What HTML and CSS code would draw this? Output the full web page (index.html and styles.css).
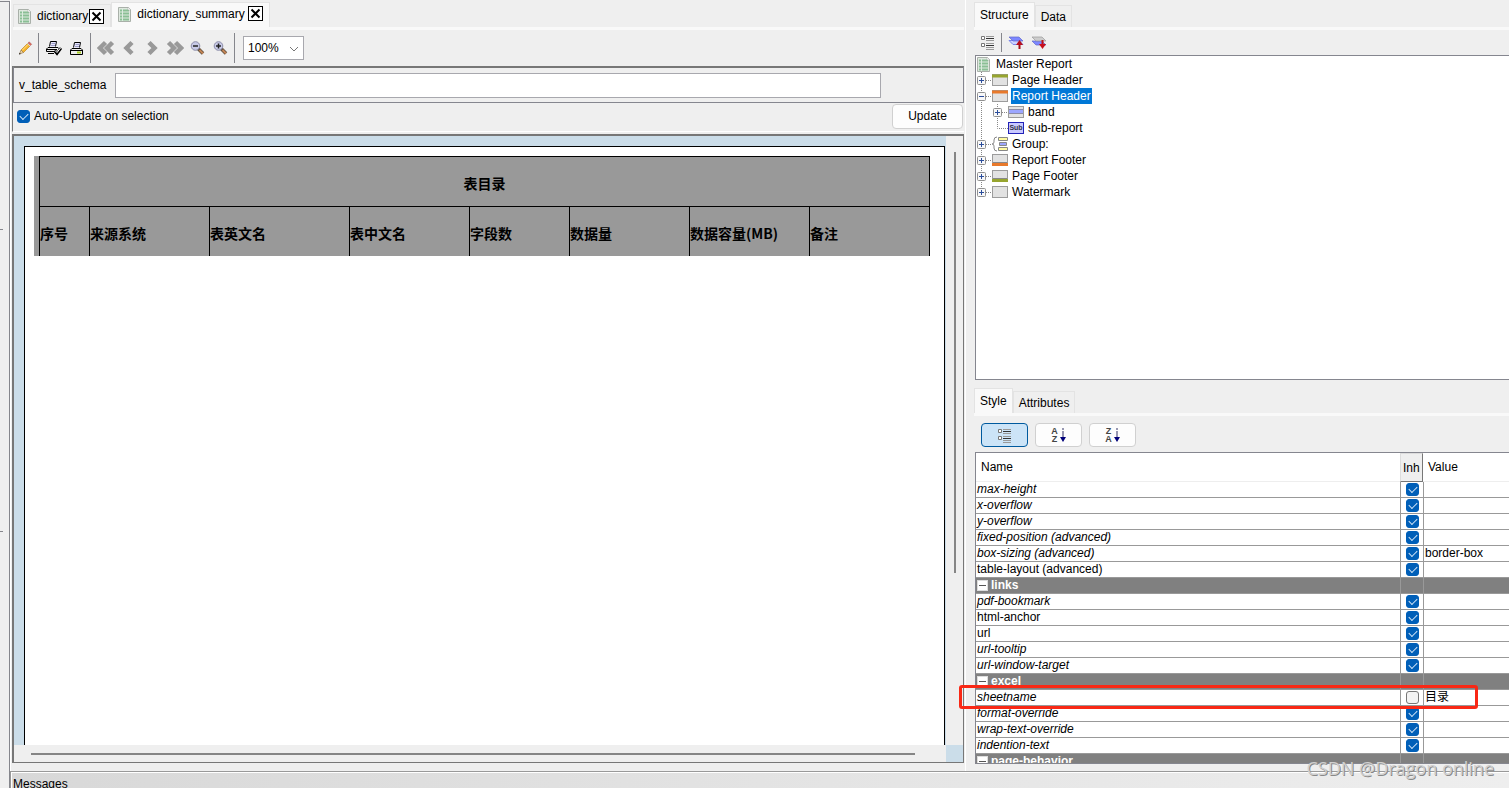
FILE: index.html
```html
<!DOCTYPE html>
<html lang="en">
<head>
<meta charset="utf-8">
<title>Report Designer</title>
<link rel="stylesheet" href="styles.css">
</head>
<body>
<svg class="defs" aria-hidden="true">
  <symbol id="doc" viewBox="0 0 16 16"><path d="M1.500 1.500h10l2 2v12h-12z" fill="#dfe8df" stroke="#a9b0a9"/><path d="M3 4.500h9M3 7.500h9M3 10.500h9M3 13.500h9" stroke="#8abf95" stroke-width="2"/><path d="M5.500 2v13" stroke="#dcebdf"/><path d="M11 1l3 3h-3z" fill="#fff" stroke="#a5aaa5" stroke-width=".5"/></symbol>
  <symbol id="close" viewBox="0 0 15 15"><rect x=".5" y=".5" width="14" height="14" fill="#fff" stroke="#000"/><path d="M3.500 3.500l8 8M11.500 3.500l-8 8" stroke="#000" stroke-width="2"/></symbol>
  <symbol id="pencil" viewBox="0 0 16 16"><path d="M4 10l6.500-6.500 2.500 2.500-6.500 6.500z" fill="#f6b52c" stroke="#b77b18" stroke-width=".6"/><path d="M5 10.500l6-6" stroke="#ffe28a"/><path d="M11 3l1.200-1.200 2.500 2.500L13.500 5.500z" fill="#e0655b" stroke="#9f6058" stroke-width=".5"/><path d="M10.500 3.500l2.500 2.500" stroke="#d5d5d5"/><path d="M4 10l2.500 2.500-4 1.500z" fill="#eed6a8" stroke="#8a6a3b" stroke-width=".6"/><path d="M2 14.500l.5-1.800 1.300 1.200z" fill="#222"/></symbol>
  <symbol id="printer" viewBox="0 0 16 16"><path d="M4.500 7.500l1-5h6l-1 5" fill="#e6e6fa" stroke="#000"/><path d="M6.500 4.500h4M6 6.500h4" stroke="#9a9ac8"/><path d="M3 8.500h9l1.500 1.500v4.500h-12V10z" fill="#eee" stroke="#000"/><path d="M1 10.500h13" stroke="#000"/><path d="M8 12.500h4" stroke="#a9cf25" stroke-width="2"/></symbol>
  <symbol id="printcheck" viewBox="0 0 16 16"><path d="M3.500 6.500l1-5h6l-1 5" fill="#e6e6fa" stroke="#000"/><path d="M5.500 3.500h4M5 5.500h4" stroke="#9a9ac8"/><path d="M2 7.500h10l1.500 1.500v2.500H.500V9z" fill="#eee" stroke="#000"/><path d="M1 9.500h10M2 13.500h6" stroke="#000"/><path d="M8.500 10.500l2.500 3 4-5.500" fill="none" stroke="#000" stroke-width="2.800"/><path d="M9 10.500l2 2 3.500-4.500" fill="none" stroke="#fff"/></symbol>
  <symbol id="left" viewBox="0 0 16 16"><path d="M11 2.500L5.500 8l5.500 5.500" fill="none" stroke="#999" stroke-width="4.500"/></symbol>
  <symbol id="dleft" viewBox="0 0 18 16"><path d="M8.500 2.500L3 8l5.500 5.500M15.500 2.500L10 8l5.500 5.500" fill="none" stroke="#999" stroke-width="4.500"/></symbol>
  <symbol id="lens" viewBox="0 0 16 16"><path d="M8 8.500l5 5" stroke="#60503f" stroke-width="3.500"/><path d="M9.500 10l3.500 3.500" stroke="#c58555" stroke-width="1.800"/><circle cx="5.500" cy="6" r="4.300" fill="#c7c9e6" stroke="#8b8ca8"/><path d="M3 6h5" stroke="#222" stroke-width="1.500"/></symbol>
  <symbol id="list" viewBox="0 0 14 15"><path d="M.500 1.500h3v3h-3zM.500 8.500h3v3h-3z" fill="#fff" stroke="#777"/><path d="M5 3.500h8M5 10.500h8" stroke="#333"/><path d="M5 1.500h8M5 5.500h8M5 8.500h8M5 12.500h8M5 14.500h8" stroke="#999"/></symbol>
  <symbol id="plus" viewBox="0 0 16 16"><path d="M5.500 0v16M10 8.500h6" stroke="#888" stroke-dasharray="1 1"/><rect x="1.500" y="4.500" width="8" height="8" rx="1" fill="#f8f8f8" stroke="#909090"/><path d="M3 8.500h5M5.500 6v5" stroke="#2b4d9b"/></symbol>
  <symbol id="pluslast" viewBox="0 0 16 16"><path d="M5.500 0v4M10 8.500h6" stroke="#888" stroke-dasharray="1 1"/><rect x="1.500" y="4.500" width="8" height="8" rx="1" fill="#f8f8f8" stroke="#909090"/><path d="M3 8.500h5M5.500 6v5" stroke="#2b4d9b"/></symbol>
  <symbol id="minus" viewBox="0 0 16 16"><path d="M5.500 0v16M10 8.500h6" stroke="#888" stroke-dasharray="1 1"/><rect x="1.500" y="4.500" width="8" height="8" rx="1" fill="#f8f8f8" stroke="#909090"/><path d="M3 8.500h5" stroke="#2b4d9b"/></symbol>
  <symbol id="line" viewBox="0 0 16 16"><path d="M5.500 0v16" stroke="#888" stroke-dasharray="1 1"/></symbol>
  <symbol id="elbow" viewBox="0 0 16 16"><path d="M5.500 0v8.500h10.500" fill="none" stroke="#888" stroke-dasharray="1 1"/></symbol>
  <symbol id="box" viewBox="0 0 16 16"><rect x=".5" y="2.500" width="15" height="11" fill="#e2e2e2" stroke="#9c9c9c"/></symbol>
  <symbol id="minusbox" viewBox="0 0 11 11"><rect x=".5" y=".5" width="10" height="10" fill="#fff" stroke="#ddd"/><path d="M2 5.500h7" stroke="#555"/></symbol>
</svg>

<div class="app">
  <aside class="rail"><i class="tick tick-a"></i><i class="tick tick-b"></i></aside>

  <main class="editor">
    <nav class="tabs">
      <div class="tab"><svg class="i16"><use href="#doc"/></svg><span>dictionary</span><button class="close" aria-label="Close dictionary"><svg><use href="#close"/></svg></button></div>
      <div class="tab active"><svg class="i16"><use href="#doc"/></svg><span>dictionary_summary</span><button class="close" aria-label="Close dictionary_summary"><svg><use href="#close"/></svg></button></div>
    </nav>
    <div class="toolbar">
      <button class="tool" aria-label="Edit"><svg class="i16"><use href="#pencil"/></svg></button>
      <i class="sep"></i>
      <button class="tool" aria-label="Preview"><svg class="i16"><use href="#printcheck"/></svg></button>
      <button class="tool" aria-label="Print"><svg class="i16"><use href="#printer"/></svg></button>
      <i class="sep"></i>
      <button class="tool" aria-label="First page"><svg class="i18"><use href="#dleft"/></svg></button>
      <button class="tool" aria-label="Previous page"><svg class="i16"><use href="#left"/></svg></button>
      <button class="tool" aria-label="Next page"><svg class="i16 flip"><use href="#left"/></svg></button>
      <button class="tool" aria-label="Last page"><svg class="i18 flip"><use href="#dleft"/></svg></button>
      <button class="tool" aria-label="Zoom out"><svg class="i16"><use href="#lens"/></svg></button>
      <button class="tool" aria-label="Zoom in"><svg class="i16"><use href="#lens"/><path d="M5.500 3.500v5" stroke="#222" stroke-width="1.500"/></svg></button>
      <i class="sep"></i>
      <div class="zoom"><select aria-label="Zoom"><option>100%</option></select><svg class="chev" viewBox="0 0 10 6"><path d="M1 1l4 4 4-4" fill="none" stroke="#777"/></svg></div>
    </div>
    <section class="params">
      <div class="field"><label for="schema">v_table_schema</label><input id="schema" type="text"></div>
      <div class="update"><input id="auto" class="check" type="checkbox" checked><label for="auto">Auto-Update on selection</label><button class="btn">Update</button></div>
    </section>
    <section class="preview">
      <div class="canvas">
        <div class="page">
          <div class="band">
            <table class="report">
              <colgroup><col class="c50"><col class="c120"><col class="c140"><col class="c120"><col class="c100"><col class="c120"><col class="c120"><col class="c121"></colgroup>
              <tr><th class="title" colspan="8">表目录</th></tr>
              <tr><th>序号</th><th>来源系统</th><th>表英文名</th><th>表中文名</th><th>字段数</th><th>数据量</th><th>数据容量(MB)</th><th>备注</th></tr>
            </table>
          </div>
        </div>
      </div>
      <div class="vscroll"><i></i></div>
      <div class="hscroll"><i></i></div>
      <div class="corner"></div>
    </section>
  </main>

  <aside class="side">
    <nav class="tabs side-tabs"><button class="tab active">Structure</button><button class="tab">Data</button></nav>
    <div class="toolbar side-tools">
      <button class="tool" aria-label="Expand list"><svg class="ilist"><use href="#list"/></svg></button>
      <i class="sep"></i>
      <button class="tool" aria-label="Move up"><svg class="ilayer" viewBox="0 0 16 14"><path d="M1 4.500h10l4 4H5z" fill="#ccd2ff" stroke="#7b86e8"/><path d="M1 1h10l4 4H5z" fill="#7d87ff" stroke="#6069c8" stroke-width=".7"/><path d="M11.500 13V6" stroke="#a50f18" stroke-width="2"/><path d="M8 9l3.500-5L15 9z" fill="#b80f1c"/></svg></button>
      <button class="tool" aria-label="Move down"><svg class="ilayer" viewBox="0 0 16 14"><path d="M1 5h10l4 4H5z" fill="#7d87ff" stroke="#6069c8" stroke-width=".7"/><path d="M1 1h10l4 4H5z" fill="#ccc" stroke="#999" stroke-width=".7"/><path d="M11.500 4v6" stroke="#c01018" stroke-width="2"/><path d="M8 8l3.500 5L15 8z" fill="#c80f1c"/></svg></button>
    </div>
    <ul class="tree">
      <li><svg class="i16"><use href="#doc"/></svg><span>Master Report</span></li>
      <li><svg class="i16"><use href="#plus"/></svg><svg class="i16"><use href="#box"/><path d="M0 4h16" stroke="#97a52f" stroke-width="3"/></svg><span>Page Header</span></li>
      <li><svg class="i16"><use href="#minus"/></svg><svg class="i16"><use href="#box"/><path d="M0 4h16" stroke="#e8792b" stroke-width="3"/></svg><span class="selected">Report Header</span></li>
      <li><svg class="i16"><use href="#line"/></svg><svg class="i16"><use href="#plus"/></svg><svg class="i16"><use href="#box"/><path d="M1 7.500h14" stroke="#9ca6ff" stroke-width="3"/><path d="M1 5.500h14M1 9.500h14" stroke="#8c8ca8"/></svg><span>band</span></li>
      <li><svg class="i16"><use href="#line"/></svg><svg class="i16"><use href="#elbow"/></svg><i class="sub">Sub</i><span>sub-report</span></li>
      <li><svg class="i16"><use href="#plus"/></svg><svg class="i16" viewBox="0 0 16 16"><path d="M5 1q-3 0-3 3v2q0 2-2 2 2 0 2 2v2q0 3 3 3" fill="none" stroke="#888"/><path d="M6.500 1.500h9v3h-9zM6.500 11.500h9v3h-9z" fill="#fffaa0" stroke="#888"/><path d="M7.500 6.500h7v3h-7z" fill="#9ca6ff" stroke="#888"/></svg><span>Group:</span></li>
      <li><svg class="i16"><use href="#plus"/></svg><svg class="i16"><use href="#box"/><path d="M0 12.500h16" stroke="#e8792b" stroke-width="3"/><path d="M1 10.500h14" stroke="#888"/></svg><span>Report Footer</span></li>
      <li><svg class="i16"><use href="#plus"/></svg><svg class="i16"><use href="#box"/><path d="M0 12.500h16" stroke="#97a52f" stroke-width="3"/><path d="M1 10.500h14" stroke="#888"/></svg><span>Page Footer</span></li>
      <li><svg class="i16"><use href="#pluslast"/></svg><svg class="i16"><use href="#box"/></svg><span>Watermark</span></li>
    </ul>

    <nav class="tabs side-tabs lower"><button class="tab active">Style</button><button class="tab">Attributes</button></nav>
    <div class="sorts">
      <button class="btn sort on" aria-label="Group"><svg class="ilist"><use href="#list"/></svg></button>
      <button class="btn sort" aria-label="Sort ascending"><span>A<br>Z</span><svg class="iarrow" viewBox="0 0 6 14"><path d="M3 0v2M3 3v6" stroke="#336"/><path d="M0 9h6l-3 5z" fill="#00007a"/></svg></button>
      <button class="btn sort" aria-label="Sort descending"><span>Z<br>A</span><svg class="iarrow" viewBox="0 0 6 14"><path d="M3 0v2M3 3v6" stroke="#336"/><path d="M0 9h6l-3 5z" fill="#00007a"/></svg></button>
    </div>
    <div class="props-wrap">
      <div class="props">
        <table>
          <colgroup><col><col class="cinh"><col class="cval"></colgroup>
          <thead><tr><th>Name</th><th class="inh">Inh</th><th>Value</th></tr></thead>
          <tbody>
            <tr><td class="it">max-height</td><td><input class="check" type="checkbox" checked aria-label="Inherit max-height"></td><td></td></tr>
            <tr><td class="it">x-overflow</td><td><input class="check" type="checkbox" checked aria-label="Inherit x-overflow"></td><td></td></tr>
            <tr><td class="it">y-overflow</td><td><input class="check" type="checkbox" checked aria-label="Inherit y-overflow"></td><td></td></tr>
            <tr><td class="it">fixed-position (advanced)</td><td><input class="check" type="checkbox" checked aria-label="Inherit fixed-position"></td><td></td></tr>
            <tr><td class="it">box-sizing (advanced)</td><td><input class="check" type="checkbox" checked aria-label="Inherit box-sizing"></td><td>border-box</td></tr>
            <tr><td>table-layout (advanced)</td><td><input class="check" type="checkbox" checked aria-label="Inherit table-layout"></td><td></td></tr>
            <tr class="group"><td><svg><use href="#minusbox"/></svg>links</td><td></td><td></td></tr>
            <tr><td class="it">pdf-bookmark</td><td><input class="check" type="checkbox" checked aria-label="Inherit pdf-bookmark"></td><td></td></tr>
            <tr><td>html-anchor</td><td><input class="check" type="checkbox" checked aria-label="Inherit html-anchor"></td><td></td></tr>
            <tr><td>url</td><td><input class="check" type="checkbox" checked aria-label="Inherit url"></td><td></td></tr>
            <tr><td class="it">url-tooltip</td><td><input class="check" type="checkbox" checked aria-label="Inherit url-tooltip"></td><td></td></tr>
            <tr><td class="it">url-window-target</td><td><input class="check" type="checkbox" checked aria-label="Inherit url-window-target"></td><td></td></tr>
            <tr class="group"><td><svg><use href="#minusbox"/></svg>excel</td><td></td><td></td></tr>
            <tr><td class="it">sheetname</td><td><input class="check" type="checkbox" aria-label="Inherit sheetname"></td><td>目录</td></tr>
            <tr><td class="it">format-override</td><td><input class="check" type="checkbox" checked aria-label="Inherit format-override"></td><td></td></tr>
            <tr><td class="it">wrap-text-override</td><td><input class="check" type="checkbox" checked aria-label="Inherit wrap-text-override"></td><td></td></tr>
            <tr><td class="it">indention-text</td><td><input class="check" type="checkbox" checked aria-label="Inherit indention-text"></td><td></td></tr>
            <tr class="group"><td><svg><use href="#minusbox"/></svg>page-behavior</td><td></td><td></td></tr>
          </tbody>
        </table>
      </div>
      <div class="highlight"></div>
    </div>
  </aside>

  <footer class="messages">Messages</footer>
  <div class="watermark">CSDN @Dragon online</div>
</div>
</body>
</html>
```
FILE: styles.css
```css
* { box-sizing: border-box; }
body { margin: 0; background: #efefef; color: #000; font: 12px/16px "Liberation Sans", "Noto Sans CJK SC", sans-serif; }
button, input, select { font: inherit; color: inherit; }
button { border: 0; padding: 0; background: none; }
svg { display: block; flex: none; }
.defs { position: absolute; width: 0; height: 0; }
.app { position: relative; display: grid; height: 100vh; overflow: hidden; grid-template: minmax(0, 1fr) 17px / 10px minmax(0, 955fr) minmax(0, 544fr); }
.i16 { width: 16px; height: 16px; }
.i18 { width: 18px; height: 16px; }
.ilist { width: 14px; height: 15px; }
.ilayer { width: 16px; height: 14px; }
.iarrow { width: 6px; height: 14px; }
.flip { transform: scaleX(-1); }

.rail { position: relative; grid-row: 1 / 3; margin-top: 1px; border-top: 1px solid #85868c; border-right: 1px solid #85868c; }
.tick { position: absolute; left: 0; width: 3px; height: 1px; background: #85868c; }
.tick-a { top: 227px; }
.tick-b { top: 529px; }

.editor { display: flex; flex-direction: column; min-height: 0; padding: 0 1px 8px 2px; border-left: 1px solid #fff; }
.tabs { display: flex; align-items: flex-end; height: 30px; padding-top: 2px; border-bottom: 3px solid #f9f9f9; }
.tab { display: flex; align-items: center; height: 23px; padding: 0 6px 0 3px; border: 1px solid #e3e3e3; border-bottom: 0; }
.tab .i16 { margin-right: 4px; }
.tab .close { margin-left: 1px; }
.tab.active { height: 25px; padding-bottom: 3px; padding-left: 5px; background: #f9f9f9; }
.tab.active .close { margin-left: 3px; }
.close svg { width: 15px; height: 15px; }

.toolbar { display: flex; align-items: center; height: 36px; flex: none; }
.tool { display: grid; place-items: center; width: 23px; height: 24px; }
.sep { width: 1px; height: 30px; margin: 0 3px 0 2px; background: #85868c; }
.zoom { position: relative; margin-left: 5px; }
.zoom select { display: block; width: 61px; height: 24px; padding: 0 4px; appearance: none; border: 1px solid #a8a8ae; border-radius: 0; background: #fff; }
.chev { position: absolute; right: 5px; top: 10px; width: 10px; height: 6px; pointer-events: none; }

.params { flex: none; border-left: 1px solid #777; margin-left: -1px; border-bottom: 1px solid #fff; }
.field { display: flex; align-items: center; gap: 5px; height: 37px; padding: 0 82px 0 5px; border: 1px solid #85868f; border-top: 2px solid #777; }
.field label { width: 91px; }
.field input { flex: 1; min-width: 0; height: 25px; border: 1px solid #a8a8ae; background: #fff; padding: 0 4px; }
.update { display: flex; align-items: center; height: 28px; padding: 0 1px 2px 4px; }
.update label { margin-left: 4px; flex: 1; }
.btn { width: 71px; height: 25px; border: 1px solid #d0d0d0; border-radius: 4px; background: #fdfdfd; }
.check { appearance: none; display: block; flex: none; width: 13px; height: 13px; margin: 0; border: 1px solid #777; border-radius: 3px; background: #f3f3f3; }
.check:checked { border-color: #005fb8; background: #005fb8; }
.check:checked::before { content: ""; display: block; width: 7px; height: 4px; margin: 2px; border: solid #cfe4f7; border-width: 0 0 1px 1px; transform: rotate(-45deg); }

.preview { flex: 1; min-height: 0; display: grid; grid-template: minmax(0, 1fr) 17px / minmax(0, 1fr) 17px; margin: 2px 0 0 -1px; border: 2px solid #777; border-width: 2px 1px 1px 2px; }
.canvas { padding: 10px 1px 0 10px; background: #cbdde9; }
.page { height: 100%; padding: 9px; border: 1px solid #000; border-bottom: 0; background: #fff; }
.band { width: max-content; padding-left: 5px; background: #999; }
.report { width: 891px; table-layout: fixed; border-spacing: 0; font: bold 14px/20px "Noto Sans CJK SC", sans-serif; }
.report th { height: 50px; padding: 2px 0 0; border: solid #000; border-width: 1px 0 0 1px; text-align: left; white-space: nowrap; }
.report th:last-child { border-right-width: 1px; }
.report .title { text-align: center; }
.c50 { width: 50px; }
.c100 { width: 100px; }
.c120 { width: 120px; }
.c121 { width: 121px; }
.c140 { width: 140px; }
.vscroll { padding: 16px 0 0 8px; }
.vscroll i { display: block; width: 2px; height: 71%; background: #858585; }
.hscroll { padding: 8px 31px 0 17px; }
.hscroll i { display: block; height: 2px; background: #858585; }
.corner { background: #cbdde9; }

.side { display: flex; flex-direction: column; min-width: 0; min-height: 0; padding: 0 0 7px 8px; border-left: 1px solid #fff; }
.side-tabs { flex: none; }
.side-tabs .tab { padding: 0 5px; height: 22px; }
.side-tabs .tab.active { height: 25px; }
.side-tools { height: 25px; padding-left: 2px; }
.side-tools .sep { height: 19px; margin-right: 2px; }
.tree { flex: none; height: 325px; margin: 0 0 0 1px; padding: 0; list-style: none; border: 1px solid #85868f; border-right: 0; background: #fff; }
.tree li { display: flex; height: 16px; }
.tree span { margin-left: 3px; padding: 0 1px; }
.tree .selected { background: #0078d7; color: #fff; }
.sub { width: 16px; height: 12px; margin-top: 2px; border: 1px solid #2222b8; background: #c9c9ff; color: #334; font: bold 7px/10px "Liberation Sans", sans-serif; text-align: center; }
.lower { height: 30px; margin-top: 6px; }
.sorts { display: flex; gap: 7px; height: 36px; padding: 7px 0 0 7px; flex: none; }
.sort { display: flex; align-items: center; justify-content: center; gap: 2px; width: 47px; height: 24px; font: bold 9px/8px "Liberation Sans", sans-serif; color: #444; }
.sort.on { border-color: #005a9e; background: #cce4f7; }
.props-wrap { position: relative; flex: 1; min-height: 0; margin-left: 1px; }
.props { height: 100%; overflow: hidden; border: 1px solid #85868f; border-right: 0; background: #fff; }
.props table { width: 100%; table-layout: fixed; border-spacing: 0; }
.cinh { width: 23px; }
.cval { width: 86px; }
.props th { height: 29px; padding: 0 5px; border-bottom: 1px solid #eee; font-weight: normal; text-align: left; }
.props .inh { padding: 0 0 0 2px; border: 1px solid #ddd; border-right-color: #777; border-bottom-color: #777; background: #efefef; overflow: hidden; }
.props td { height: 16px; padding: 0 1px; border-bottom: 1px solid #999; line-height: 15px; white-space: nowrap; }
.props td + td { border-left: 1px solid #999; }
.props td .check { margin-left: 4px; }
.it { font-style: italic; }
.props .group td { background: #808080; color: #fff; font-weight: bold; }
.group svg { display: inline-block; width: 11px; height: 11px; margin-right: 3px; vertical-align: -2px; }
.highlight { position: absolute; top: 233px; left: -16px; right: 31px; height: 24px; border: 3px solid #f92815; border-radius: 3px; }

.messages { grid-column: 2 / 4; padding: 4px 0 0 2px; border-top: 1px solid #999; border-left: 1px solid #999; background: linear-gradient(90deg, #d8d8d8, #eee); box-shadow: inset 1px 1px #fff; white-space: nowrap; overflow: hidden; }
.watermark { position: absolute; right: 15px; bottom: 9px; font: 18px/22px "Open Sans", sans-serif; color: #d0d0d0; text-shadow: 1px 1px #888; white-space: nowrap; }
```
